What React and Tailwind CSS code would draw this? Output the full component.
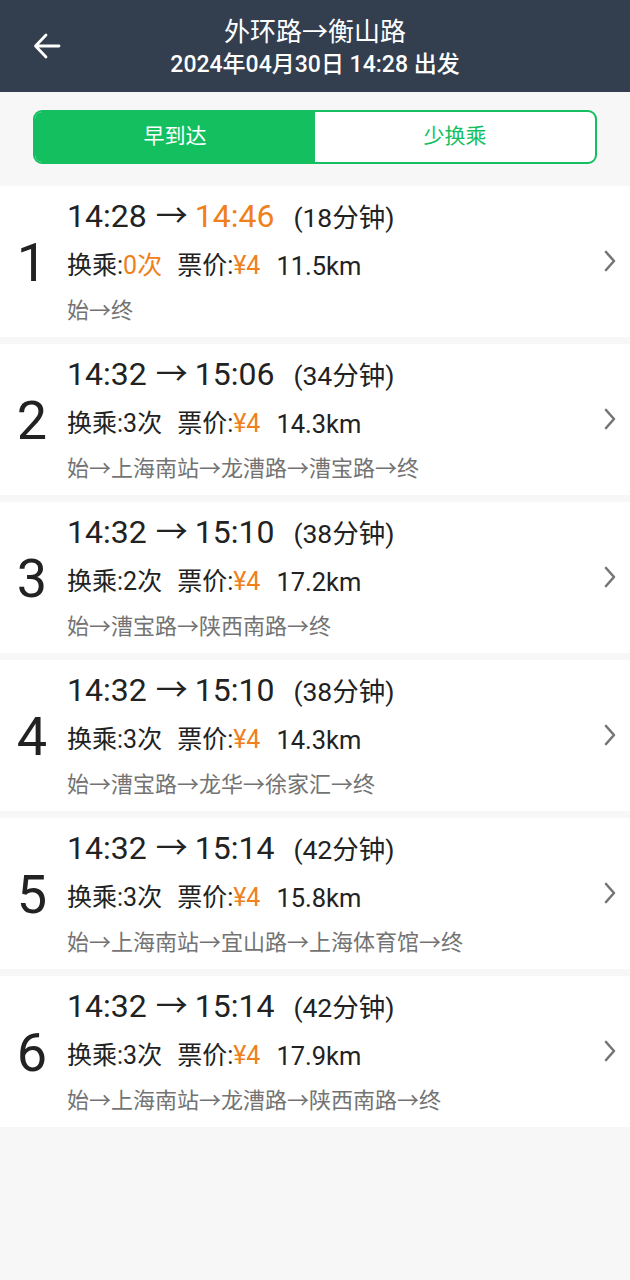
import React from "react";

const routes = [
  { n: 1, dep: "14:28", arr: "14:46", dur: "18", tr: "0", km: "11.5", path: "始→终", best: true },
  { n: 2, dep: "14:32", arr: "15:06", dur: "34", tr: "3", km: "14.3", path: "始→上海南站→龙漕路→漕宝路→终" },
  { n: 3, dep: "14:32", arr: "15:10", dur: "38", tr: "2", km: "17.2", path: "始→漕宝路→陕西南路→终" },
  { n: 4, dep: "14:32", arr: "15:10", dur: "38", tr: "3", km: "14.3", path: "始→漕宝路→龙华→徐家汇→终" },
  { n: 5, dep: "14:32", arr: "15:14", dur: "42", tr: "3", km: "15.8", path: "始→上海南站→宜山路→上海体育馆→终" },
  { n: 6, dep: "14:32", arr: "15:14", dur: "42", tr: "3", km: "17.9", path: "始→上海南站→龙漕路→陕西南路→终" },
];

const font = { fontFamily: 'Roboto, "Noto Sans CJK SC", sans-serif' };

function Card({ r }) {
  return (
    <div className="flex h-[151px] items-center bg-white">
      <div className="w-[64px] text-center text-[54px] leading-none text-[#222] mt-[3px]">{r.n}</div>
      <div className="flex h-full flex-1 flex-col pt-[12px] pl-[3px]">
        <div className="flex items-baseline text-[#222]">
          <span className="text-[32px] leading-[36px]">{r.dep}</span>
          <span className="text-[32px] leading-[36px] ml-[9px] mr-[7px]">→</span>
          <span className={"text-[32px] leading-[36px] " + (r.best ? "text-[#ef801c]" : "")}>{r.arr}</span>
          <span className="ml-[19px] text-[26.5px] leading-[36px]">({r.dur}分钟)</span>
        </div>
        <div className="mt-[14px] flex text-[25px] leading-[32px] text-[#222]">
          <span>
            换乘:<span className={r.best ? "text-[#ef801c]" : ""}>{r.tr}次</span>
          </span>
          <span className="ml-[15px]">
            票价:<span className="text-[#ef801c]">¥4</span>
          </span>
          <span className="ml-[16px] text-[25.5px]">{r.km}km</span>
        </div>
        <div className="mt-[15px] text-[22px] leading-[28px] text-[#737373]">{r.path}</div>
      </div>
      <div className="pr-[13px] pl-[4px] mt-[-2px]">
        <svg width="14" height="24" viewBox="0 0 14 24" fill="none">
          <path d="M3 3 L11 12 L3 21" stroke="#757575" strokeWidth="2.6" strokeLinecap="round" strokeLinejoin="round" />
        </svg>
      </div>
    </div>
  );
}

export default function App() {
  return (
    <div className="min-h-[1280px] w-[630px] bg-[#f7f7f7]" style={font}>
      <div className="relative flex h-[92px] flex-col items-center justify-center bg-[#333e4f] pt-[4px] text-white">
        <div className="absolute left-[33px] top-[33px]">
          <svg width="28" height="26" viewBox="0 0 28 26" fill="none">
            <path d="M26 13 H3 M13 2 L2.5 13 L13 24" stroke="white" strokeWidth="2.8" strokeLinecap="round" strokeLinejoin="round" />
          </svg>
        </div>
        <div className="text-[26px] leading-[32px]">外环路→衡山路</div>
        <div className="text-[23px] font-medium leading-[30px] mt-[2px]">2024年04月30日 14:28 出发</div>
      </div>
      <div className="px-[33px] pt-[18px] pb-[22px]">
        <div className="flex h-[54px] overflow-hidden rounded-[9px] border-2 border-[#13bf5f] bg-white text-[21px]">
          <div className="flex flex-1 items-center justify-center bg-[#13bf5f] text-white">早到达</div>
          <div className="flex flex-1 items-center justify-center text-[#13bf5f]">少换乘</div>
        </div>
      </div>
      <div className="flex flex-col gap-[7px]">
        {routes.map((r) => (
          <Card key={r.n} r={r} />
        ))}
      </div>
    </div>
  );
}
